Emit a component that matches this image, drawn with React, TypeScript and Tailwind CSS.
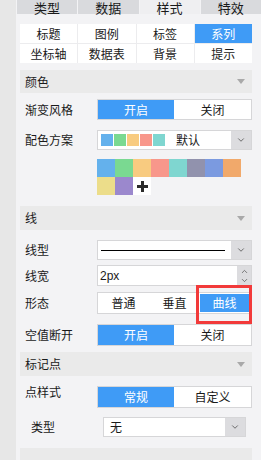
import { ChevronDown, ChevronUp } from 'lucide-react'

const TABS = ['类型', '数据', '样式', '特效']
const SUB_TABS = ['标题', '图例', '标签', '系列', '坐标轴', '数据表', '背景', '提示']
const SCHEME = ['#64b1ec', '#7ad991', '#f8cb80', '#f8978b', '#7fd6d0']
const PALETTE = ['#64b1ec', '#7ad991', '#f8cb80', '#f8978b', '#7fd6d0', '#9192ad', '#7b9ae0', '#f1a96b', '#ecdd8a', '#9b88cd']

const SectionHeader = ({ title, className = '' }: { title: string; className?: string }) => (
  <div className={`flex h-[24px] items-center justify-between bg-[#eaeaea] pl-[5px] pr-[7px] ${className}`}>
    <span>{title}</span>
    <span className="h-0 w-0 border-x-[4px] border-t-[5px] border-x-transparent border-t-[#a9a9a9]" />
  </div>
)

const Row = ({ label, className = '', children }: { label: string; className?: string; children: React.ReactNode }) => (
  <div className={`flex items-center ${className}`}>
    <span className="w-[77px] shrink-0 pl-[5px]">{label}</span>
    <div className="flex h-full flex-1">{children}</div>
  </div>
)

const Toggle = ({ left, right }: { left: string; right: string }) => (
  <div className="flex flex-1 border border-[#d6d6d8] bg-white">
    <div className="flex w-[76px] items-center justify-center bg-[#3f9bf6] text-white">{left}</div>
    <div className="flex flex-1 items-center justify-center">{right}</div>
  </div>
)

const DropButton = () => (
  <div className="flex w-[20px] items-center justify-center bg-[#dcdcdf] text-[#555]">
    <ChevronDown className="h-[10px] w-[10px]" strokeWidth={2} />
  </div>
)

export default function App() {
  return (
    <div className="flex h-[460px] w-[261px] overflow-hidden font-['Noto_Sans_CJK_SC',sans-serif] text-[12px] leading-none text-[#1a1a1a]">
      <div className="w-[16px] shrink-0 bg-[#e7e7e7]" />
      <div className="flex flex-1 flex-col bg-[#f3f3f5]">
        <div className="ml-px grid h-[19px] grid-cols-4 gap-px">
          {TABS.map((tab) => (
            <div
              key={tab}
              className={`flex items-start justify-center pt-px text-[13px] leading-[13px] ${tab === '样式' ? 'bg-[#efeff1]' : 'bg-[#d9dadd]'}`}
            >
              {tab}
            </div>
          ))}
        </div>

        <div className="ml-[4px] mr-[9px] flex flex-col">
          <div className="mt-[10px] grid grid-cols-4 gap-px bg-[#ececee]">
            {SUB_TABS.map((tab) => (
              <div
                key={tab}
                className={`flex h-[19px] items-center justify-center ${tab === '系列' ? 'bg-[#3f9bf6] text-white' : 'bg-white'}`}
              >
                {tab}
              </div>
            ))}
          </div>

          <SectionHeader title="颜色" className="mt-[7px] !h-[23px]" />

          <Row label="渐变风格" className="mt-[6px] h-[21px]">
            <Toggle left="开启" right="关闭" />
          </Row>

          <Row label="配色方案" className="mt-[10px] h-[20px]">
            <div className="flex flex-1 border border-[#d6d6d8] bg-white">
              <div className="flex flex-1 items-center gap-px pl-[3px]">
                {SCHEME.map((c) => (
                  <span key={c} className="h-[12px] w-[12px]" style={{ background: c }} />
                ))}
                <span className="ml-[10px]">默认</span>
              </div>
              <DropButton />
            </div>
          </Row>

          <div className="mt-[9px] ml-[77px] grid w-[144px] grid-cols-8">
            {PALETTE.map((c, i) => (
              <span key={i} className="h-[18px] w-[18px]" style={{ background: c }} />
            ))}
            <span className="relative flex h-[18px] w-[18px] items-center justify-center bg-white">
              <span className="absolute h-[3px] w-[11px] bg-[#2b2b2b]" />
              <span className="absolute h-[11px] w-[3px] bg-[#2b2b2b]" />
            </span>
          </div>

          <SectionHeader title="线" className="mt-[11px]" />

          <Row label="线型" className="mt-[10px] h-[20px]">
            <div className="flex flex-1 border border-[#d6d6d8] bg-white">
              <div className="flex flex-1 items-center px-[3px] pr-[6px]">
                <span className="h-px w-full bg-black" />
              </div>
              <DropButton />
            </div>
          </Row>

          <Row label="线宽" className="mt-[5px] h-[21px]">
            <div className="flex flex-1 border border-[#d6d6d8] bg-white">
              <div className="flex flex-1 items-center pl-[2px] font-['Liberation_Sans',sans-serif] text-[12px]">2px</div>
              <div className="flex w-[14px] flex-col items-center justify-center bg-[#dcdcdf] text-[#555]">
                <ChevronUp className="h-[9px] w-[9px]" strokeWidth={2} />
                <ChevronDown className="h-[9px] w-[9px]" strokeWidth={2} />
              </div>
            </div>
          </Row>

          <Row label="形态" className="relative mt-[6px] h-[22px]">
            <div className="flex flex-1 border border-[#d6d6d8] bg-white">
              <div className="flex flex-1 items-center justify-center">普通</div>
              <div className="flex flex-1 items-center justify-center">垂直</div>
              <div className="my-px mr-[2px] flex w-[49px] items-center justify-center bg-[#3f9bf6] text-white">曲线</div>
            </div>
            <span className="absolute left-[176px] top-[-7px] h-[39px] w-[56px] border-[3px] border-[#f23a3a]" />
          </Row>

          <Row label="空值断开" className="mt-[10px] h-[22px]">
            <Toggle left="开启" right="关闭" />
          </Row>

          <SectionHeader title="标记点" className="mt-[6px]" />

          <Row label="点样式" className="mt-[10px] h-[22px] !items-start">
            <Toggle left="常规" right="自定义" />
          </Row>

          <div className="mt-[9px] flex h-[20px] items-center pl-[11px] pr-[6px]">
            <span className="w-[72px] shrink-0">类型</span>
            <div className="flex h-full flex-1 border border-[#d6d6d8] bg-white">
              <div className="flex flex-1 items-center pl-[6px]">无</div>
              <DropButton />
            </div>
          </div>

          <div className="mt-[11px] h-[24px] bg-[#eaeaea]" />
        </div>
      </div>
    </div>
  )
}
